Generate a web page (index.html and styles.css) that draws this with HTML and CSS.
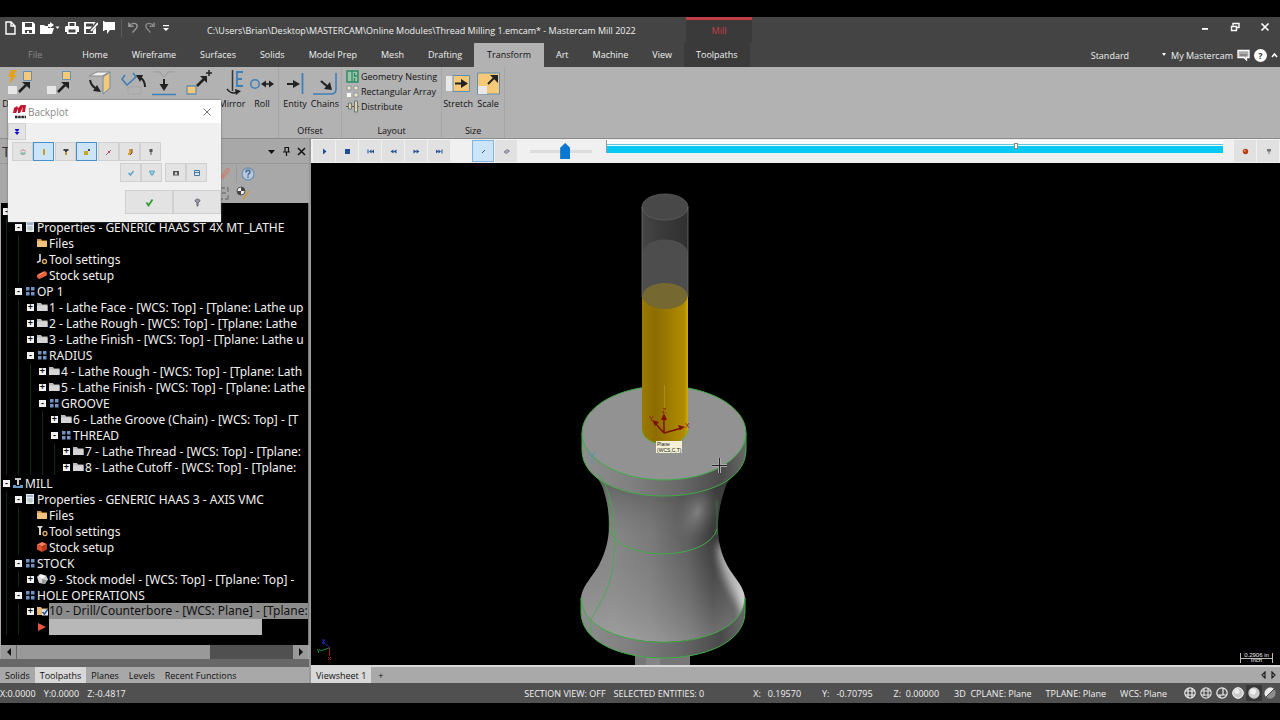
FILE: index.html
```html
<!DOCTYPE html>
<html lang="en">
<head>
    <meta charset="UTF-8">
    <meta name="viewport" content="width=device-width, initial-scale=1.0">
    <title>Mastercam Mill 2022</title>
    <link rel="stylesheet" href="styles.css">
</head>
<body>
    <!-- shared icons -->
    <svg class="defs" width="0" height="0" aria-hidden="true">
        <symbol id="i-group" viewBox="0 0 12 12"><path fill="#6f94c4" d="M2 2h3.500v3.500H2zM7 2h3.500v3.500H7zM2 7h3.500v3.500H2zM7 7h3.500v3.500H7z"/></symbol>
        <symbol id="i-folder" viewBox="0 0 12 12"><path fill="#bdbdbd" d="M1 2h4l1 1.500h5.500V10H1z"/><path fill="#d6d6d6" d="M1 4.500h10.500V10H1z"/></symbol>
        <symbol id="i-files" viewBox="0 0 12 12"><path fill="#d99a45" d="M1 2h4l1 1.500h5V10H1z"/><path fill="#f2c27c" d="M1 4h10v6H1z"/></symbol>
        <symbol id="i-props" viewBox="0 0 12 12"><path fill="#e8eef2" d="M2 1h8v10H2z"/><path fill="#9db4c4" d="M3 2h6v2H3z"/><path stroke="#9aa" stroke-width=".7" d="M3 6h6M3 8h6M5 5v5M7 5v5"/></symbol>
        <symbol id="i-lathetool" viewBox="0 0 12 12"><path fill="none" stroke="#c8d4e2" stroke-width="1.700" d="M4 1v7L1 9.500"/><circle cx="8.500" cy="8.500" r="2" fill="none" stroke="#e0ab6a" stroke-width="1.300"/></symbol>
        <symbol id="i-milltool" viewBox="0 0 12 12"><path fill="#d5d5d5" d="M1 1h6L5 3.500V10H3V3.500z"/><circle cx="9" cy="8.500" r="2" fill="none" stroke="#e0ab6a" stroke-width="1.300"/></symbol>
        <symbol id="i-bar" viewBox="0 0 12 12"><path stroke="#e8603c" stroke-width="5" stroke-linecap="round" d="M3.500 7.300l5-2.500"/><path stroke="#ff9c80" stroke-linecap="round" d="M3 5.800l4.500-2.200"/></symbol>
        <symbol id="i-block" viewBox="0 0 12 12"><path fill="#ff7c5a" d="M1 3.500L6 1l5 2L6 5.500z"/><path fill="#e05030" d="M1 3.500l5 2V11L1 8.500z"/><path fill="#b83a20" d="M11 3L6 5.500V11l5-2.500z"/></symbol>
        <symbol id="i-model" viewBox="0 0 12 12"><path fill="#d8d8d8" d="M1 4l3-3 6 1.500 2 4L9 11l-6-1z"/><path fill="#fff" d="M3 3l3-1.500 3 2L6 6z"/><path fill="#999" d="M6 6l5 1-2 4-3-1z"/></symbol>
        <symbol id="i-mill" viewBox="0 0 12 12"><path fill="#ccc" d="M3 1h6v2H7v5H5V3H3z"/><path fill="#6b97c4" d="M1 8h3v1h4V8h3v3H1z"/></symbol>
        <symbol id="i-selected" viewBox="0 0 12 12"><path fill="#e8b876" d="M1 2h4l1 1.500h6V10H1z"/><path fill="#dfe6ee" d="M6 4.500h6v6H6z"/><path fill="none" stroke="#224e8a" stroke-width="1.500" d="M6.500 7l2 2 3.500-5"/></symbol>
        <symbol id="i-arrow" viewBox="0 0 12 12"><path fill="#e8553c" d="M2 2l8 4-8 4z"/></symbol>
    </svg>

    <header class="header">
        <div class="titlebar">
            <div class="quick">
                <button aria-label="New"><svg width="13" height="14" viewBox="0 0 13 14"><path fill="none" stroke="#fff" stroke-width="1.400" d="M2 1h5l4 4v8H2zM7 1v4h4"/></svg></button>
                <button aria-label="Save"><svg width="13" height="14" viewBox="0 0 13 14"><path fill="#fff" fill-rule="evenodd" d="M0 1h11l2 2v10H0zM3 2v4h7V2zM3 9v3h2v-2h2v2h3V9z"/></svg></button>
                <button aria-label="Open"><svg width="20" height="14" viewBox="0 0 20 14"><path fill="#fff" d="M0 4h4l1 1h3V3h2V1l4 3-4 3V6H8v1h6l-2 6H0z"/><path fill="#fff" d="M15.500 5.500h4l-2 2.500z"/></svg></button>
                <button aria-label="Print"><svg width="14" height="14" viewBox="0 0 14 14"><path fill="#fff" fill-rule="evenodd" d="M3 1h8v4h2l1 1v5h-2v2H2v-2H0V6l1-1h2zM4.500 2v3h5V2zM3.500 8.500v3h7v-3z"/></svg></button>
                <button aria-label="Save as"><svg width="14" height="14" viewBox="0 0 14 14"><path fill="#fff" fill-rule="evenodd" d="M0 1h12v12H0zM2 2.500v3h7v-3zM2 8v4h7V8z"/><path stroke="#444" stroke-width="3.500" d="M13 2L6 11"/><path stroke="#fff" stroke-width="1.800" d="M14 2L7 10"/></svg></button>
                <button aria-label="Flag"><svg width="13" height="14" viewBox="0 0 13 14"><path fill="#fff" d="M0 0h1.500v1H12v8H7l-3 4V9H1.500v1H0z"/></svg></button>
                <span class="divider"></span>
                <button aria-label="Undo"><svg width="12" height="14" viewBox="0 0 13 14"><path fill="none" stroke="#999" stroke-width="1.600" d="M2 1v4h5M2 5c3-4 9-4 9 0 0 3-3 4-5 7"/></svg></button>
                <button aria-label="Redo"><svg width="12" height="14" viewBox="0 0 13 14"><path fill="none" stroke="#888" stroke-width="1.600" d="M11 1v4H6M11 5C8 1 2 1 2 5c0 3 3 4 5 7"/></svg></button>
                <button aria-label="Customize"><svg width="10" height="14" viewBox="0 0 10 14"><path fill="#fff" d="M2 4h6v1.300H2zM2 7h6l-3 3z"/></svg></button>
            </div>
            <h1>C:\Users\Brian\Desktop\MASTERCAM\Online Modules\Thread Milling 1.emcam* - Mastercam Mill 2022</h1>
            <div class="context">Mill</div>
            <div class="window-buttons">
                <button aria-label="Minimize"><svg width="10" height="10" viewBox="0 0 10 10"><path fill="#fff" d="M2 6h6v1.800H2z"/></svg></button>
                <button aria-label="Restore"><svg width="10" height="10" viewBox="0 0 10 10"><path fill="none" stroke="#fff" stroke-width="1.400" d="M3 3.500V1.500h6v4H7M1.500 4.500h5v4h-5z"/></svg></button>
                <button aria-label="Close"><svg width="10" height="10" viewBox="0 0 10 10"><path stroke="#fff" stroke-width="1.600" d="M1.500 1.500l7 7M8.500 1.500l-7 7"/></svg></button>
            </div>
        </div>
        <nav class="tabs">
            <a href="#" class="file">File</a>
            <a href="#">Home</a>
            <a href="#">Wireframe</a>
            <a href="#">Surfaces</a>
            <a href="#">Solids</a>
            <a href="#">Model Prep</a>
            <a href="#">Mesh</a>
            <a href="#">Drafting</a>
            <a href="#" class="active">Transform</a>
            <a href="#">Art</a>
            <a href="#">Machine</a>
            <a href="#">View</a>
            <a href="#" class="contextual">Toolpaths</a>
            <div class="tabs-right">
                <button class="standard">Standard</button>
                <svg width="6" height="4" viewBox="0 0 6 4"><path fill="#fff" d="M1 0h4L3 3z"/></svg>
                <button>My Mastercam</button>
                <svg width="13" height="13" viewBox="0 0 13 13"><path fill="#aaa" stroke="#fff" stroke-width="1.300" d="M1 1.500h11v7H9.500V11L7 8.500H1z"/><path stroke="#666" d="M3 6h7"/></svg>
                <button class="help" aria-label="Help">?</button>
                <svg width="7" height="6" viewBox="0 0 7 6"><path fill="none" stroke="#fff" stroke-width="1.600" d="M1 5l2.500-3L6 5"/></svg>
            </div>
        </nav>
    </header>

    <section class="ribbon">
        <div class="group">
            <div class="tools">
                <button class="wide"><svg width="30" height="26" viewBox="0 0 30 26"><path fill="#e3a01c" d="M5 0h6L8 5h3l-8 9 2-7H2z"/><path fill="#f5c978" stroke="#688faf" d="M17.500 1.500h8v9h-8z"/><path fill="#e6e6e6" d="M2 16h9v8H2z"/><path stroke="#222" stroke-width="2.500" d="M13 22l7-7"/><path fill="#222" d="M16 12h8v7z"/></svg>Dynamic</button>
                <button class="wide" aria-label="Translate"><svg width="30" height="26" viewBox="0 0 30 26"><path fill="#f5c978" stroke="#688faf" d="M17.500 1.500h8v8h-8z"/><path fill="#e6e6e6" d="M2 16h9v8H2z"/><path stroke="#222" stroke-width="2.500" d="M13 22l7-7"/><path fill="#222" d="M16 12h8v7z"/></svg></button>
                <button class="wide" aria-label="Translate to plane"><svg width="28" height="26" viewBox="0 0 28 26"><path fill="#f0f0f0" stroke="#888" d="M4 6l8-4h13l-8 4z"/><path fill="#f5c978" stroke="#688faf" d="M18 7l7-5v16l-7 6z"/><path fill="none" stroke="#222" stroke-width="2" d="M5 10c1 5 4 8 8 9"/><path fill="#222" d="M16 22l-8-1 4-6z"/></svg></button>
                <button aria-label="Rotate"><svg width="28" height="26" viewBox="0 0 28 26"><path fill="none" stroke="#3f7fb8" stroke-width="1.600" d="M6 5l-3 4 5 6 9-8-3-4"/><path fill="none" stroke="#222" stroke-width="2" d="M26 17c0-5-2-8-5-9"/><path fill="#222" d="M17 5l7 0-3 7z"/><path fill="none" stroke="#a5a5a5" d="M9 17h13v7H9z"/></svg></button>
                <button aria-label="Project"><svg width="28" height="26" viewBox="0 0 28 26"><path fill="none" stroke="#999" d="M4 2h7l4 5 4-5h7"/><path stroke="#222" stroke-width="2" d="M15 9v8"/><path fill="#222" d="M10.500 14h9L15 21z"/><path stroke="#3f7fb8" stroke-width="1.500" d="M3 24.500h24"/></svg></button>
                <button class="wide" aria-label="Move to origin"><svg width="28" height="26" viewBox="0 0 28 26"><path fill="#f5c978" stroke="#688faf" stroke-width="1.300" d="M3 16h9v8H3z"/><path stroke="#222" stroke-width="2.500" d="M13 16l7-7"/><path fill="#222" d="M16 6h7v7z"/><path stroke="#222" stroke-width="1.500" d="M25 0v6M22 3h6"/></svg></button>
                <button><svg width="26" height="26" viewBox="0 0 26 26"><path stroke="#333" stroke-width="1.500" d="M13.500 0v21"/><path fill="none" stroke="#3f7fb8" stroke-width="1.800" d="M24 2h-6v14h6M18 9h5"/><path stroke="#222" stroke-width="1.600" fill="none" d="M8 19c3 4 7 5 10 3"/><path fill="#222" d="M16 19l6 2-5 4z"/></svg>Mirror</button>
                <button><svg width="26" height="26" viewBox="0 0 26 26"><circle cx="6" cy="14" r="4.300" fill="none" stroke="#3f7fb8" stroke-width="1.600"/><path stroke="#222" stroke-width="1.600" d="M14 14h9"/><path fill="#222" d="M12 14l5-3.500v7zM25 14l-5-3.500v7z"/></svg>Roll</button>
            </div>
        </div>
        <div class="group">
            <div class="tools">
                <button><svg width="26" height="26" viewBox="0 0 26 26"><path stroke="#222" stroke-width="2" d="M5 14h8"/><path fill="#222" d="M11 10l7 4-7 4z"/><path stroke="#3f7fb8" stroke-width="1.800" d="M20.500 3v21"/></svg>Entity</button>
                <button><svg width="26" height="26" viewBox="0 0 26 26"><path stroke="#222" stroke-width="2.200" d="M9 11l7 6"/><path fill="#222" d="M18 12l2 8-8-1z"/><path fill="none" stroke="#3f7fb8" stroke-width="1.600" d="M24 3v16q0 5-5 5H1"/></svg>Chains</button>
            </div>
            <h2>Offset</h2>
        </div>
        <div class="group">
            <div class="list">
                <button><svg width="13" height="13" viewBox="0 0 13 13"><path fill="#9cc4a8" stroke="#2f8a64" stroke-width="1.500" d="M1 1h11v11H1z"/><path fill="none" stroke="#2f8a64" stroke-width="1.300" d="M6 1v11M8.500 3v3H11M8.500 8v4"/></svg>Geometry Nesting</button>
                <button><svg width="13" height="13" viewBox="0 0 13 13"><path fill="#f1e4c5" stroke="#8c969c" d="M1 1h4v4H1zM8 1h4v4H8zM8 8h4v4H8z"/><path fill="#fff" d="M1 8h4v4H1z"/></svg>Rectangular Array</button>
                <button><svg width="13" height="13" viewBox="0 0 13 13"><path stroke="#555" d="M0 6.500h13"/><path fill="#f5cf88" stroke="#5c7c90" d="M2.500 3h3v6h-3zM8.500 1h3v11h-3z"/></svg>Distribute</button>
            </div>
            <h2>Layout</h2>
        </div>
        <div class="group">
            <div class="tools">
                <button><svg width="26" height="26" viewBox="0 0 26 26"><path fill="#e8e8e8" d="M1 6h7v15H1z"/><path fill="#f5c978" stroke="#5f8fb4" d="M8 5.500h16.500v16H8z"/><path stroke="#222" stroke-width="2" d="M10 13.500h8"/><path fill="#222" d="M16 9l7 4.500-7 4.500z"/></svg>Stretch</button>
                <button><svg width="26" height="26" viewBox="0 0 26 26"><path fill="#f5c978" stroke="#5f8fb4" d="M2.500 3h22v21h-22z"/><path fill="#e8e8e8" d="M3 16h9v8H3z"/><path stroke="#222" stroke-width="2" d="M13 14l6-6"/><path fill="#222" d="M15 5h8v8z"/></svg>Scale</button>
            </div>
            <h2>Size</h2>
        </div>
    </section>

    <main class="workspace">
        <aside class="manager">
            <div class="manager-title">
                <h2>Toolpaths</h2>
                <button aria-label="Options"><svg width="9" height="9" viewBox="0 0 9 9"><path fill="#111" d="M1 3h7L4.500 7z"/></svg></button>
                <button aria-label="Pin"><svg width="9" height="9" viewBox="0 0 9 9"><path fill="none" stroke="#111" stroke-width="1.200" d="M3 .5h3.500V5H3zM1 5h7M4.500 5v4"/></svg></button>
                <button aria-label="Close panel"><svg width="9" height="9" viewBox="0 0 9 9"><path stroke="#111" stroke-width="1.500" d="M1 1l7 7M8 1L1 8"/></svg></button>
            </div>
            <div class="manager-tools">
                <div class="row">
                    <svg width="14" height="14" viewBox="0 0 14 14"><path fill="none" stroke="#c58a7c" stroke-width="2" d="M2 12L8 3c2-3 4 0 2 2L4 12"/></svg>
                    <span class="divider"></span>
                    <svg width="14" height="14" viewBox="0 0 14 14"><circle cx="7" cy="7" r="6" fill="#b7c9da" stroke="#7493b4" stroke-width="1.300"/><path fill="none" stroke="#44668c" stroke-width="1.500" d="M5 5.500c0-3 4-3 4-.5C9 6.500 7 6.500 7 8.500M7 9.500v1.500"/></svg>
                </div>
                <div class="row">
                    <svg width="14" height="14" viewBox="0 0 14 14"><path fill="none" stroke="#777" stroke-width="1.300" d="M3 2h4M9 2h1v4M10 9v4H7M5 13H3M4 7h4"/></svg>
                    <svg width="14" height="14" viewBox="0 0 14 14"><circle cx="5" cy="5" r="4" fill="#eee" stroke="#555"/><path fill="#444" d="M5 1a4 4 0 0 1 4 4H1a4 4 0 0 0 4 4z"/><path stroke="#c89a4c" stroke-width="2" d="M7 13l6-8"/></svg>
                </div>
            </div>
            <div class="tree">
                <ul>
                    <li>
                        <div class="node"><span class="box">-</span></div>
                        <ul>
                            <li>
                                <div class="node"><span class="box">-</span><svg><use href="#i-props"/></svg>Properties - GENERIC HAAS ST 4X MT_LATHE</div>
                                <ul>
                                    <li><div class="node leaf"><svg><use href="#i-files"/></svg>Files</div></li>
                                    <li><div class="node leaf"><svg><use href="#i-lathetool"/></svg>Tool settings</div></li>
                                    <li><div class="node leaf"><svg><use href="#i-bar"/></svg>Stock setup</div></li>
                                </ul>
                            </li>
                            <li>
                                <div class="node"><span class="box">-</span><svg><use href="#i-group"/></svg>OP 1</div>
                                <ul>
                                    <li><div class="node"><span class="box">+</span><svg><use href="#i-folder"/></svg>1 - Lathe Face - [WCS: Top] - [Tplane: Lathe up</div></li>
                                    <li><div class="node"><span class="box">+</span><svg><use href="#i-folder"/></svg>2 - Lathe Rough - [WCS: Top] - [Tplane: Lathe</div></li>
                                    <li><div class="node"><span class="box">+</span><svg><use href="#i-folder"/></svg>3 - Lathe Finish - [WCS: Top] - [Tplane: Lathe u</div></li>
                                    <li>
                                        <div class="node"><span class="box">-</span><svg><use href="#i-group"/></svg>RADIUS</div>
                                        <ul>
                                            <li><div class="node"><span class="box">+</span><svg><use href="#i-folder"/></svg>4 - Lathe Rough - [WCS: Top] - [Tplane: Lath</div></li>
                                            <li><div class="node"><span class="box">+</span><svg><use href="#i-folder"/></svg>5 - Lathe Finish - [WCS: Top] - [Tplane: Lathe</div></li>
                                            <li>
                                                <div class="node"><span class="box">-</span><svg><use href="#i-group"/></svg>GROOVE</div>
                                                <ul>
                                                    <li><div class="node"><span class="box">+</span><svg><use href="#i-folder"/></svg>6 - Lathe Groove (Chain) - [WCS: Top] - [T</div></li>
                                                    <li>
                                                        <div class="node"><span class="box">-</span><svg><use href="#i-group"/></svg>THREAD</div>
                                                        <ul>
                                                            <li><div class="node"><span class="box">+</span><svg><use href="#i-folder"/></svg>7 - Lathe Thread - [WCS: Top] - [Tplane:</div></li>
                                                            <li><div class="node"><span class="box">+</span><svg><use href="#i-folder"/></svg>8 - Lathe Cutoff - [WCS: Top] - [Tplane:</div></li>
                                                        </ul>
                                                    </li>
                                                </ul>
                                            </li>
                                        </ul>
                                    </li>
                                </ul>
                            </li>
                        </ul>
                    </li>
                    <li>
                        <div class="node"><span class="box">-</span><svg><use href="#i-mill"/></svg>MILL</div>
                        <ul>
                            <li>
                                <div class="node"><span class="box">-</span><svg><use href="#i-props"/></svg>Properties - GENERIC HAAS 3 - AXIS VMC</div>
                                <ul>
                                    <li><div class="node leaf"><svg><use href="#i-files"/></svg>Files</div></li>
                                    <li><div class="node leaf"><svg><use href="#i-milltool"/></svg>Tool settings</div></li>
                                    <li><div class="node leaf"><svg><use href="#i-block"/></svg>Stock setup</div></li>
                                </ul>
                            </li>
                            <li>
                                <div class="node"><span class="box">-</span><svg><use href="#i-group"/></svg>STOCK</div>
                                <ul>
                                    <li><div class="node"><span class="box">+</span><svg><use href="#i-model"/></svg>9 - Stock model - [WCS: Top] - [Tplane: Top] -</div></li>
                                </ul>
                            </li>
                            <li>
                                <div class="node"><span class="box">-</span><svg><use href="#i-group"/></svg>HOLE OPERATIONS</div>
                                <ul>
                                    <li><div class="node"><span class="box">+</span><svg><use href="#i-selected"/></svg><span class="selected">10 - Drill/Counterbore - [WCS: Plane] - [Tplane:</span></div></li>
                                    <li><div class="node leaf"><svg><use href="#i-arrow"/></svg><span class="insert"></span></div></li>
                                </ul>
                            </li>
                        </ul>
                    </li>
                </ul>
            </div>
            <div class="scrollbar">
                <button aria-label="Scroll left"><svg width="6" height="8" viewBox="0 0 6 8"><path fill="#111" d="M5 0v8L1 4z"/></svg></button>
                <div class="track"><div class="thumb"></div></div>
                <button aria-label="Scroll right"><svg width="6" height="8" viewBox="0 0 6 8"><path fill="#111" d="M1 0v8l4-4z"/></svg></button>
            </div>
            <div class="manager-tabs">
                <button>Solids</button>
                <button class="active">Toolpaths</button>
                <button>Planes</button>
                <button>Levels</button>
                <button>Recent Functions</button>
            </div>
        </aside>

        <section class="viewer">
            <div class="player">
                <button aria-label="Play"><svg width="9" height="9" viewBox="0 0 9 9"><path fill="#1f4e96" d="M3 1.500l3.500 3L3 7.500z"/></svg></button>
                <button aria-label="Stop"><svg width="9" height="9" viewBox="0 0 9 9"><path fill="#1f4e96" d="M2 2h5v5H2z"/></svg></button>
                <button aria-label="Start"><svg width="9" height="9" viewBox="0 0 9 9"><path fill="#1f4e96" d="M1.500 2.500h1v4h-1zM5.500 2.500v4l-2.500-2zM8 2.500v4l-2.500-2z"/></svg></button>
                <button aria-label="Step back"><svg width="9" height="9" viewBox="0 0 9 9"><path fill="#1f4e96" d="M4.500 2.500v4L1.500 4.500zM7.500 2.500v4l-3-2z"/></svg></button>
                <button aria-label="Step forward"><svg width="9" height="9" viewBox="0 0 9 9"><path fill="#1f4e96" d="M1.500 2.500v4l3-2zM4.500 2.500v4l3-2z"/></svg></button>
                <button aria-label="End"><svg width="9" height="9" viewBox="0 0 9 9"><path fill="#1f4e96" d="M1 2.500v4l2.500-2zM3.500 2.500v4l2.500-2zM6.500 2.500h1v4h-1z"/></svg></button>
                <button class="on spaced" aria-label="Trace mode"><svg width="9" height="9" viewBox="0 0 9 9"><path stroke="#456" d="M3 6l3-3"/></svg></button>
                <button aria-label="Run mode"><svg width="9" height="9" viewBox="0 0 9 9"><path fill="#aab" stroke="#667" stroke-width=".7" d="M2 5l3-2.500L7.500 4l-3 2.500z"/></svg></button>
                <input type="range" class="speed" min="0" max="100" value="58" aria-label="Speed">
                <div class="timeline">
                    <span class="marker"></span>
                </div>
                <button aria-label="Record"><svg width="9" height="9" viewBox="0 0 9 9"><circle cx="4.500" cy="4.500" r="2.700" fill="#b83c10"/><circle cx="3.800" cy="3.800" r="1" fill="#e8946c"/></svg></button>
                <button aria-label="Options"><svg width="9" height="9" viewBox="0 0 9 9"><path fill="#777" d="M3 2h4v2.500H5.500V7h-1V4.500H3z"/></svg></button>
            </div>
            <div class="canvas">
                <svg class="scene" viewBox="311 163 969 502" preserveAspectRatio="xMinYMin meet">
                    <defs>
                        <linearGradient id="side"><stop offset="0" stop-color="#8d8d8d"/><stop offset=".3" stop-color="#808080"/><stop offset=".6" stop-color="#686868"/><stop offset=".85" stop-color="#4a4a4a"/><stop offset="1" stop-color="#686868"/></linearGradient>
                        <linearGradient id="neck"><stop offset="0" stop-color="#888"/><stop offset=".2" stop-color="#8a8a8a"/><stop offset=".42" stop-color="#7b7b7b"/><stop offset=".65" stop-color="#575757"/><stop offset=".8" stop-color="#2b2b2b"/><stop offset=".93" stop-color="#3c3c3c"/><stop offset="1" stop-color="#999"/></linearGradient>
                        <linearGradient id="light" x1="0" y1="0" x2="0" y2="1"><stop offset="0" stop-color="#222" stop-opacity=".75"/><stop offset=".45" stop-color="#777" stop-opacity=".2"/><stop offset="1" stop-color="#b0b0b0" stop-opacity=".55"/></linearGradient>
                        <linearGradient id="gold"><stop offset="0" stop-color="#9a7a00"/><stop offset=".3" stop-color="#8d6c02"/><stop offset=".65" stop-color="#a27f00"/><stop offset=".92" stop-color="#b08b00"/><stop offset="1" stop-color="#d0ac10"/></linearGradient>
                        <linearGradient id="glass"><stop offset="0" stop-color="#454545"/><stop offset=".5" stop-color="#393939"/><stop offset="1" stop-color="#303030"/></linearGradient>
                        <radialGradient id="spot"><stop offset="0" stop-color="#a0a0a0" stop-opacity=".6"/><stop offset="1" stop-color="#707070" stop-opacity="0"/></radialGradient>
                        <clipPath id="body"><path d="M582 450C584 466 598 474 603 488C613 518 610 543 600 563C594 576 581 586 581 600C583 656 743 656 745 600C745 586 732 576 726 563C716 543 715 518 725 488C730 474 744 466 746 450z"/></clipPath>
                    </defs>
                    <!-- part -->
                    <path fill="#777" d="M635 650h55v15h-55z"/>
                    <path fill="#aaa" d="M646 656h14v9h-14z" opacity=".3"/>
                    <path fill="url(#neck)" d="M582 450C584 466 598 474 603 488C613 518 610 543 600 563C594 576 581 586 581 600C583 656 743 656 745 600C745 586 732 576 726 563C716 543 715 518 725 488C730 474 744 466 746 450z"/>
                    <path fill="url(#light)" d="M582 450C584 466 598 474 603 488C613 518 610 543 600 563C594 576 581 586 581 600C583 656 743 656 745 600C745 586 732 576 726 563C716 543 715 518 725 488C730 474 744 466 746 450z"/>
                    <g clip-path="url(#body)">
                        <ellipse cx="698" cy="512" rx="20" ry="34" fill="url(#spot)" transform="rotate(20 698 510)"/>
                        <ellipse cx="736" cy="580" rx="9" ry="40" fill="#fff" opacity=".6" transform="rotate(-24 736 580)" filter="blur(4px)"/>
                    </g>
                    <path fill="url(#side)" d="M581 598C583 657 743 657 745 598V613C743 673 583 673 581 613z"/>
                    <path fill="url(#side)" d="M582 433v18c2 60 162 60 164 0v-18z"/>
                    <ellipse cx="664" cy="433" rx="82" ry="47" fill="#929292"/>
                    <g fill="none" stroke="#3fae45" stroke-width="1">
                        <ellipse cx="664" cy="433" rx="82" ry="47"/>
                        <path d="M582 433v18c2 60 162 60 164 0v-18"/>
                        <path d="M581 598C583 657 743 657 745 598V613C743 673 583 673 581 613z"/>
                        <path d="M610 530c10 32 97 32 107-1"/>
                        <path d="M599 474c15 20 18 60 14 90c-3 25-12 38-22 55v16" opacity=".8"/>
                        <path d="M609 500v30M717 500v35" opacity=".4"/>
                    </g>
                    <path fill="none" stroke="#4f9aa6" d="M592 465v-11M592 457l-3-6M592 457l3-5"/>
                    <!-- tool -->
                    <path fill="url(#glass)" d="M642 207v95h46v-95z"/>
                    <path fill="#4d4d4e" d="M642 253c3-18 43-18 46 0v48c-3 16-43 16-46 0z"/>
                    <ellipse cx="665" cy="207" rx="23" ry="13" fill="#484848" stroke="#606060" stroke-width=".8"/>
                    <path fill="url(#gold)" d="M642 298c2-19 44-19 46 0v132c-2 19-44 19-46 0z"/>
                    <ellipse cx="665" cy="296" rx="22.500" ry="13" fill="#756831"/>
                    <path fill="none" stroke="#707070" stroke-width=".8" d="M642 207v90M688 207v90"/>
                    <path stroke="#c3a532" stroke-width=".8" d="M664.500 385v42" opacity=".6"/>
                    <path fill="none" stroke="#4fb83a" stroke-width=".8" d="M642 430c2 19 44 19 46 0"/>
                    <!-- gnomon -->
                    <g stroke="#7d1008" stroke-width="1.500" fill="#7d1008">
                        <path d="M664 433v-16M664 433l18-5M664 433l-9-10"/>
                        <path stroke="none" d="M664 413l3 7h-6zM685 427l-7-2 2 5zM652 420l7 2-4 4z"/>
                    </g>
                    <g class="axis">
                        <text x="662" y="413">Z</text>
                        <text x="685" y="428">X</text>
                        <text x="649" y="421">Y</text>
                    </g>
                    <path fill="#f4f1d6" d="M656 441h26v12h-26z"/>
                    <g class="tip">
                        <text x="657" y="446">Plane</text>
                        <text x="657" y="452">(WCS,C,T)</text>
                    </g>
                    <path stroke="#aaa" stroke-width="3" d="M719.500 458v15M712 465.500h15"/>
                    <path stroke="#222" stroke-width="1" d="M719.500 458v15M712 465.500h15"/>
                    <!-- view axes -->
                    <g fill="none">
                        <path stroke="#a01818" d="M329.500 647v9M328 657l3 3M331 657l-3 3"/>
                        <path stroke="#1a8a2a" d="M329 648l-9 3M317 649l1.500 2 1.500-2M318.500 651v2"/>
                        <path stroke="#1c2ec0" d="M329 647l-6-5M322 640h3l-3 3h3"/>
                    </g>
                </svg>
                <div class="scale">
                    <span>0.2906 in</span>
                    <span>Inch</span>
                </div>
            </div>
            <div class="sheets">
                <button class="active">Viewsheet 1</button>
                <button aria-label="Add viewsheet">+</button>
                <svg class="arrows" width="20" height="8" viewBox="0 0 20 8"><path fill="none" stroke="#222" stroke-width="1.200" d="M5 1v6L2 4zM12 1v6l3-3z"/></svg>
            </div>
        </section>
    </main>

    <footer class="status">
        <div class="coords">
            <span>X:0.0000</span>
            <span>Y:0.0000</span>
            <span>Z:-0.4817</span>
        </div>
        <div class="info">
            <span>SECTION VIEW: OFF</span>
            <span>SELECTED ENTITIES: 0</span>
        </div>
        <div class="position">
            <span>X:&nbsp;&nbsp; 0.19570</span>
            <span>Y:&nbsp;&nbsp; -0.70795</span>
            <span>Z:&nbsp; 0.00000</span>
        </div>
        <div class="planes">
            <span>3D&nbsp; CPLANE: Plane</span>
            <span>TPLANE: Plane</span>
            <span>WCS: Plane</span>
        </div>
        <div class="shading">
            <button aria-label="Wireframe"><svg width="12" height="12" viewBox="0 0 12 12"><g fill="none" stroke="#eee" stroke-width="1.200"><circle cx="6" cy="6" r="5.200"/><path d="M4 1v10M8 1v10M1 4h10M1 8h10"/></g></svg></button>
            <button aria-label="Dimmed"><svg width="12" height="12" viewBox="0 0 12 12"><g fill="none" stroke="#ddd" stroke-width="1.200"><circle cx="6" cy="6" r="5.200"/><path d="M4 1v8M8 1v9M1 4h10M1 8h10"/></g></svg></button>
            <button aria-label="No hidden"><svg width="12" height="12" viewBox="0 0 12 12"><g fill="none" stroke="#eee" stroke-width="1.200"><circle cx="6" cy="6" r="5.200"/><path d="M7 1v7M1 8h10M4 8v3"/></g></svg></button>
            <button aria-label="Outline shaded"><svg width="12" height="12" viewBox="0 0 12 12"><circle cx="6" cy="6" r="5.300" fill="#c9c9c9" stroke="#fff"/><circle cx="5" cy="4.500" r="2.500" fill="#eee"/></svg></button>
            <button aria-label="Shaded" class="on"><svg width="12" height="12" viewBox="0 0 12 12"><circle cx="6" cy="6" r="5.700" fill="#ccc"/><circle cx="5" cy="4.500" r="3" fill="#eee"/></svg></button>
            <button aria-label="Translucent"><svg width="12" height="12" viewBox="0 0 12 12"><circle cx="6" cy="6" r="5.700" fill="#8d8d8d"/><path fill="#eee" d="M2 10A5.700 5.700 0 0 1 10 2z"/><path stroke="#444" d="M1.500 10.500l9-9"/></svg></button>
        </div>
    </footer>

    <section class="dialog" role="dialog" aria-label="Backplot">
        <div class="dialog-title">
            <svg width="14" height="14" viewBox="0 0 14 14"><path fill="#c01830" d="M1 3l3-2 1 2 3-3h5l-1 7H9l1-5-3 6H5V4L3 8H0z"/><path stroke="#222" stroke-width="2.500" stroke-dasharray="2.500 .7" d="M2 12h11"/></svg>
            <h2>Backplot</h2>
            <button aria-label="Close backplot"><svg width="8" height="8" viewBox="0 0 8 8"><path stroke="#777" d="M.5.5l7 7M7.500.5l-7 7"/></svg></button>
        </div>
        <button class="expand" aria-label="Expand"><svg width="8" height="8" viewBox="0 0 8 8"><path fill="#1010c8" d="M2 1h4v1H5l1 0-2 2-2-2zM1.500 4h5L4 7z"/></svg></button>
        <div class="dialog-row">
            <button aria-label="Display with color codes"><svg width="8" height="8" viewBox="0 0 8 8"><path fill="none" stroke="#c07070" d="M1.500 3.500c1-2 4-2 5 0"/><path fill="none" stroke="#6aa88a" d="M1.500 5c1 2 4 2 5 0z"/></svg></button>
            <button class="on" aria-label="Display tool"><svg width="8" height="8" viewBox="0 0 8 8"><path fill="#c0a030" d="M3 1h2v6H3z"/></svg></button>
            <button aria-label="Display holder"><svg width="8" height="8" viewBox="0 0 8 8"><path fill="#444" d="M1.500 1h5v2H5v1H3V3H1.500z"/><path fill="#b09838" d="M3 4h2v3H3z"/></svg></button>
            <button class="on" aria-label="Display rapid moves"><svg width="8" height="8" viewBox="0 0 8 8"><path fill="#c8a820" d="M1 3h4v4H1z"/><path fill="#446" d="M5 3V1h2v2z"/></svg></button>
            <button aria-label="Display endpoints"><svg width="8" height="8" viewBox="0 0 8 8"><path stroke="#777" d="M1 7l5-5"/><path fill="#d04050" d="M3 3h2v2H3z"/></svg></button>
            <button aria-label="Quick verify"><svg width="8" height="8" viewBox="0 0 8 8"><path fill="#e0a030" d="M3 1h3v4L4 7H2V5h1z"/><path fill="none" stroke="#744" d="M6 1v4L4 7"/></svg></button>
            <button aria-label="Options"><svg width="8" height="8" viewBox="0 0 8 8"><path fill="#555" d="M2.500 1h3v3h-1v3h-1V4h-1z"/></svg></button>
        </div>
        <div class="dialog-row right">
            <button aria-label="Restrict drawing"><svg width="8" height="8" viewBox="0 0 8 8"><path fill="none" stroke="#5ca8cc" stroke-width="1.500" d="M1.500 4l2 2 3-4"/></svg></button>
            <button aria-label="Turn off restricted drawing"><svg width="8" height="8" viewBox="0 0 8 8"><path fill="#9cc8dc" stroke="#4c9cc0" stroke-width=".8" d="M1.500 2h5L5 6H3z"/></svg></button>
            <button class="gap" aria-label="Snapshot"><svg width="8" height="8" viewBox="0 0 8 8"><path fill="#555" d="M1 2h6v4.500H1z"/><circle cx="4" cy="4.500" r="1.200" fill="#ddd"/></svg></button>
            <button aria-label="Save as geometry"><svg width="8" height="8" viewBox="0 0 8 8"><path fill="none" stroke="#4078a8" d="M1.500 1.500h5v5h-5zM2 3.500h4"/></svg></button>
        </div>
        <div class="dialog-actions">
            <button aria-label="OK"><svg width="9" height="9" viewBox="0 0 9 9"><path fill="none" stroke="#2c9a2c" stroke-width="1.700" d="M1.500 4.500l2 3 4-6"/></svg></button>
            <button aria-label="Help"><svg width="9" height="9" viewBox="0 0 9 9"><path fill="#99a" stroke="#667" d="M2 3c0-2.500 5-2.500 5 0L5 5v3H4V5z"/></svg></button>
        </div>
    </section>
</body>
</html>
```
FILE: styles.css
```css
* {
    box-sizing: border-box;
}
body {
    margin: 0;
    padding: 17px 0;
    height: 100vh;
    display: flex;
    flex-direction: column;
    background: #000;
    font-family: "Open Sans", "Noto Sans", sans-serif;
    font-size: 9px;
    color: #111;
    overflow: hidden;
}
button {
    margin: 0;
    padding: 0;
    border: none;
    background: none;
    color: inherit;
    font: inherit;
    display: flex;
    align-items: center;
    justify-content: center;
}
h1, h2 {
    margin: 0;
    font-size: 9px;
    font-weight: normal;
}
svg {
    flex: none;
    display: block;
}
.defs {
    position: absolute;
}

/* header */
.header {
    background: #444;
    color: #f0f0f0;
}
.titlebar {
    display: flex;
    align-items: center;
    height: 26px;
}
.quick {
    display: flex;
    align-items: center;
    gap: 5px;
    width: 207px;
    padding: 0 0 4px 4px;
}
.quick button {
    height: 20px;
}
.divider {
    width: 1px;
    height: 18px;
    background: #5c5c5c;
}
.titlebar h1 {
    width: 479px;
    white-space: nowrap;
}
.context {
    width: 66px;
    height: 26px;
    line-height: 22px;
    border-top: 3px solid #c23c46;
    background: #3a3a3a;
    color: #c83c46;
    text-align: center;
}
.window-buttons {
    display: flex;
    gap: 20px;
    margin-left: auto;
    padding: 0 10px 6px 0;
}
.tabs {
    display: flex;
    align-items: center;
    height: 24px;
}
.tabs a {
    padding: 0 12px;
    line-height: 24px;
    color: inherit;
    text-decoration: none;
}
.tabs .file {
    padding: 0 28px;
    color: #8a8a8a;
}
.tabs .active {
    padding: 0 13px;
    background: #b2b2b2;
    color: #111;
}
.tabs .contextual {
    background: #3a3a3a;
}
.tabs-right {
    display: flex;
    align-items: center;
    gap: 4px;
    margin-left: auto;
    padding-right: 2px;
}
.standard {
    margin-right: 28px;
}
.tabs .help {
    width: 13px;
    height: 13px;
    border-radius: 50%;
    background: #fff;
    color: #333;
    font-weight: bold;
}

/* ribbon */
.ribbon {
    display: flex;
    height: 72px;
    background: #b2b2b2;
    border-bottom: 1px solid #8c8c8c;
}
.group {
    display: flex;
    flex-direction: column;
    justify-content: space-between;
    padding: 2px 1px 0 1px;
    border-right: 1px solid #a6a6a6;
}
.tools {
    display: flex;
}
.tools button {
    flex-direction: column;
    justify-content: flex-start;
    width: 30px;
    line-height: 15px;
    padding-top: 1px;
    white-space: nowrap;
}
.tools .wide {
    width: 39px;
}
.list button {
    gap: 2px;
    line-height: 15px;
    padding: 0 3px;
}
.group h2 {
    line-height: 15px;
    text-align: center;
}

/* toolpath manager */
.workspace {
    flex: 1;
    display: flex;
    min-height: 0;
}
.manager {
    width: 311px;
    display: flex;
    flex-direction: column;
    background: #a8a8a8;
    border-right: 2px solid #999;
}
.manager-title {
    display: flex;
    align-items: center;
    gap: 6px;
    height: 24px;
    padding: 0 3px 0 2px;
}
.manager-title h2 {
    flex: 1;
    font-size: 15px;
    color: #333;
}
.manager-tools {
    height: 40px;
    padding-left: 218px;
    border-top: 1px solid #999;
}
.manager-tools .row {
    display: flex;
    align-items: center;
    gap: 4px;
    height: 19px;
}
.manager-tools .divider {
    background: #999;
}
.tree {
    flex: 1;
    min-height: 0;
    margin-left: 1px;
    border-right: 1px solid #777;
    background: #000;
    color: #f0f0f0;
    font-family: "Noto Sans", "Open Sans", sans-serif;
    font-size: 12px;
    overflow: hidden;
}
.tree ul {
    margin: 0;
    padding: 0;
    list-style: none;
}
.tree ul ul {
    padding-left: 12px;
    background: linear-gradient(#0c2a0c, #0c2a0c) 5px 0 / 1px 100% no-repeat;
}
.node {
    display: flex;
    align-items: center;
    height: 16px;
    padding-left: 2px;
    white-space: nowrap;
}
.node svg {
    width: 12px;
    height: 12px;
    margin: 0 1px 0 2px;
}
.leaf {
    padding-left: 9px;
}
.box {
    flex: none;
    width: 7px;
    height: 7px;
    background: #f2f2f2;
    color: #111;
    font: bold 9px/7px "Liberation Sans", sans-serif;
    text-align: center;
}
.selected {
    background: #8c8c8c;
    color: #111;
    line-height: 16px;
    padding-right: 10px;
}
.insert {
    width: 213px;
    height: 16px;
    background: #b8b8b8;
}
.scrollbar {
    display: flex;
    height: 14px;
    margin: 0 1px;
    background: #999;
}
.scrollbar button {
    width: 15px;
}
.track {
    flex: 1;
    background: #505050;
}
.thumb {
    width: 70%;
    height: 14px;
    background: #999;
    border-left: 1px solid #666;
}
.manager-tabs {
    display: flex;
    height: 24px;
    border-top: 8px solid #686868;
}
.manager-tabs button {
    padding: 0 5px;
}
.manager-tabs .active,
.sheets .active {
    background: #d8d8d8;
}

/* backplot player */
.viewer {
    flex: 1;
    min-width: 0;
    display: flex;
    flex-direction: column;
}
.player {
    display: flex;
    align-items: stretch;
    height: 24px;
    padding: 1px 0 1px 2px;
    background: #f0f0f0;
}
.player button {
    width: 22px;
    margin-right: 1px;
    background: #e1e1e1;
}
.player .on {
    background: #cce4f7;
    border: 1px solid #84b4dc;
}
.player .spaced {
    margin-left: 21px;
}
.speed {
    appearance: none;
    align-self: center;
    width: 62px;
    height: 16px;
    margin: 0 14px 0 12px;
    background: linear-gradient(#dcdcdc, #dcdcdc) 0 50% / 100% 3px no-repeat;
}
.speed::-webkit-slider-thumb {
    appearance: none;
    width: 10px;
    height: 16px;
    background: #0878d0;
    clip-path: polygon(0 30%, 50% 0, 100% 30%, 100% 100%, 0 100%);
}
.timeline {
    flex: 1;
    display: flex;
    margin-right: 11px;
    height: 13px;
    background: linear-gradient(#fafafa 4px, #58c8dc 4px, #58c8dc 5px, #fafafa 5px, #fafafa 6px, #08c8f4 6px);
    border-left: 1px solid #999;
}
.marker {
    width: 4px;
    height: 6px;
    margin: 3px 0 0 66%;
    background: #fff;
    border: 1px solid #888;
}

/* graphics window */
.canvas {
    flex: 1;
    min-height: 0;
    position: relative;
    background: #000;
}
.scene {
    width: 100%;
    height: 100%;
}
.axis text {
    font: 7px "Liberation Sans", sans-serif;
    fill: #8c140c;
}
.tip text {
    font: 5px "Liberation Sans", sans-serif;
    fill: #111;
}
.scale {
    position: absolute;
    right: 7px;
    bottom: 2px;
    display: flex;
    flex-direction: column;
    align-items: center;
    width: 33px;
    color: #eee;
    font: 6px/5px "Liberation Sans", sans-serif;
    border: solid #bbb;
    border-width: 0 1px;
    background: linear-gradient(#bbb, #bbb) 0 50% / 100% 1px no-repeat;
}
.sheets {
    display: flex;
    align-items: stretch;
    height: 18px;
    border-top: 2px solid #d8d8d8;
    background: #a9a9a9;
}
.sheets button {
    padding: 0 5px;
}
.sheets button + button {
    margin-left: 2px;
}
.arrows {
    align-self: center;
    margin-left: auto;
}

/* status bar */
.status {
    display: flex;
    align-items: center;
    height: 20px;
    padding-right: 2px;
    background: #505050;
    color: #f0f0f0;
    white-space: nowrap;
}
.status > div {
    display: flex;
}
.coords {
    gap: 8px;
}
.info {
    gap: 8px;
    margin-left: auto;
}
.position {
    gap: 21px;
    margin-left: 49px;
}
.planes {
    gap: 14px;
    margin-left: 15px;
}
.shading {
    margin-left: 15px;
}
.shading button {
    width: 16px;
    height: 16px;
}
.shading .on {
    background: #383838;
}

/* backplot dialog, floats over the ribbon and the manager */
.dialog {
    position: absolute;
    left: 8px;
    top: 100px;
    width: 213px;
    height: 122px;
    background: #f0f0f0;
    box-shadow: 0 0 2px #666;
}
.dialog-title {
    display: flex;
    align-items: center;
    height: 23px;
    padding: 0 10px 0 5px;
    background: #fff;
}
.dialog-title h2 {
    flex: 1;
    padding-left: 1px;
    color: #888;
    font-size: 10px;
}
.dialog button:not(.dialog-title button) {
    background: #e3e3e3;
    border: 1px solid #d0d0d0;
}
.dialog .expand {
    width: 18px;
    height: 17px;
}
.dialog-row {
    display: flex;
    padding: 2px 0 0 4px;
}
.dialog-row button {
    width: 21px;
    height: 19px;
}
.dialog-row .on + button {
    margin-left: 1px;
}
.dialog .dialog-row .on {
    background: #cce4f7;
    border-color: #4a90c8;
}
.dialog-row.right {
    padding: 2px 14px 0 0;
    justify-content: flex-end;
}
.dialog-row .gap {
    margin-left: 3px;
}
.dialog-actions {
    display: flex;
    justify-content: flex-end;
    padding-top: 8px;
}
.dialog-actions button {
    width: 48px;
    height: 24px;
}
```
